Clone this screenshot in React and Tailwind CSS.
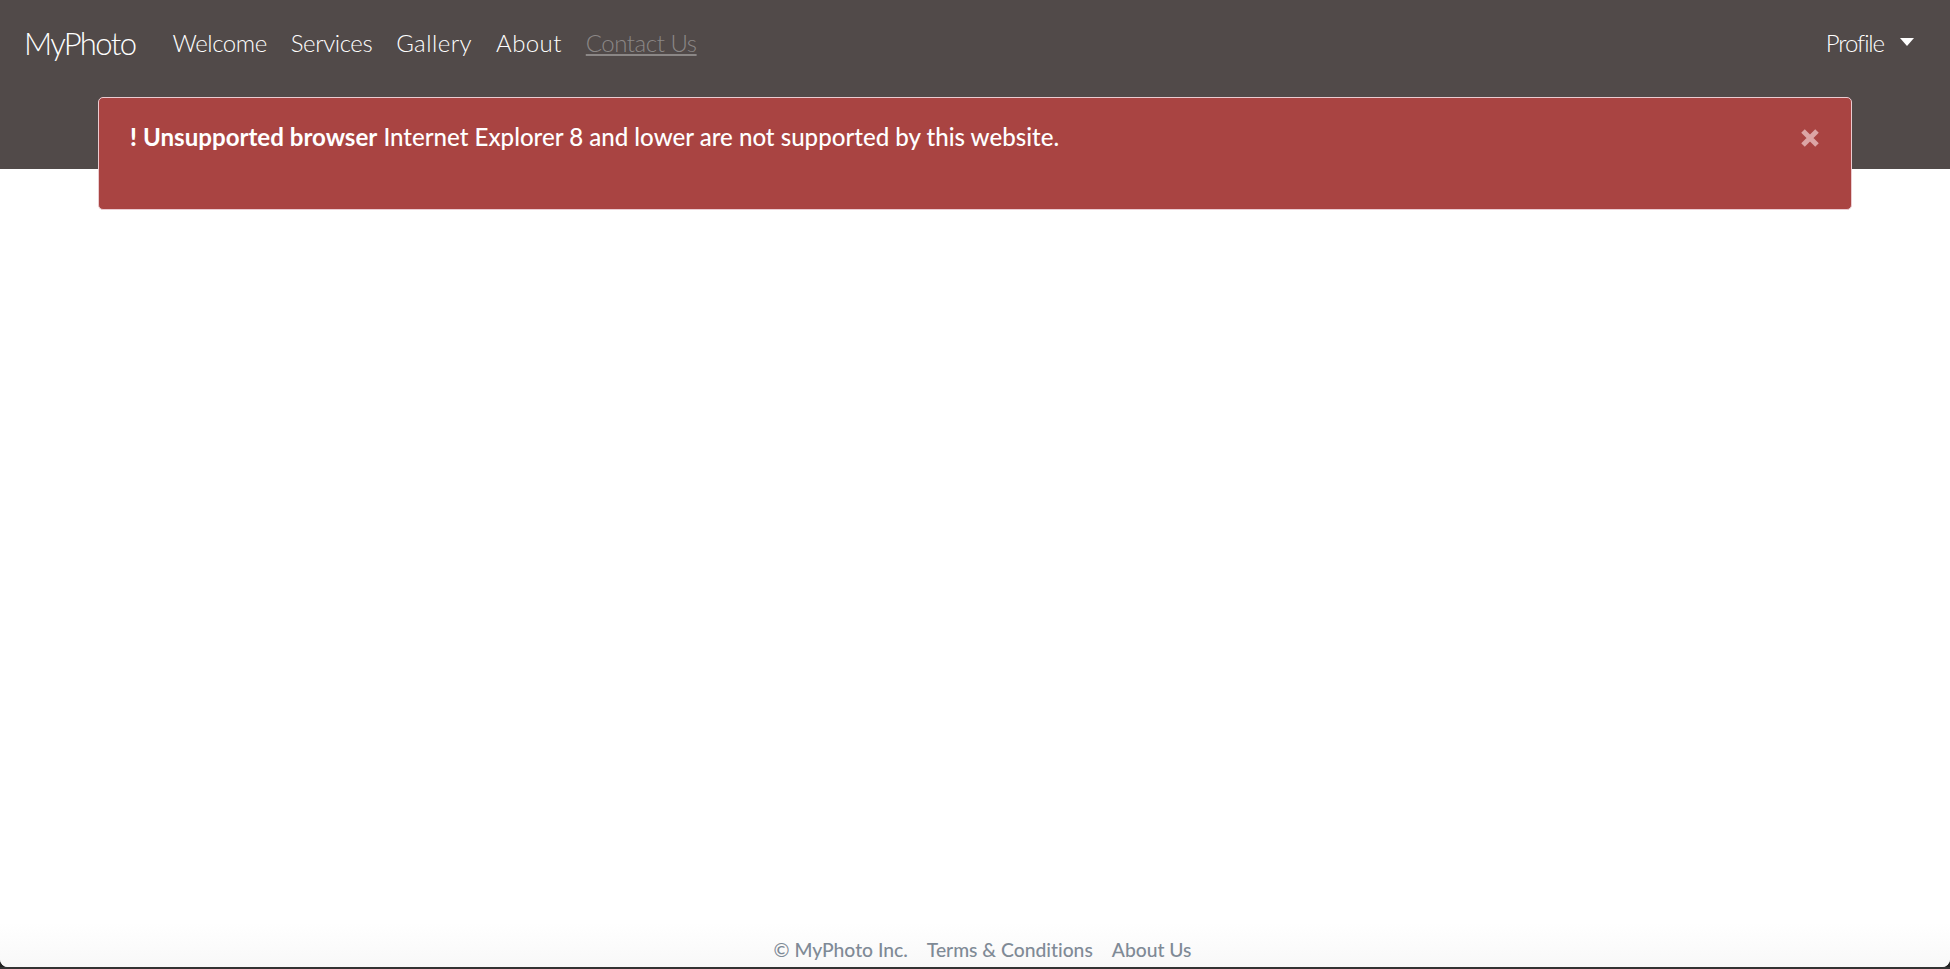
import React from "react";

const navFont = "font-['Lato','Noto_Sans',sans-serif] font-light";

const NavLink = ({ children, className = "" }) => (
  <a href="#" className={`${navFont} text-[24px] leading-[30px] text-white ${className}`}>
    {children}
  </a>
);

export default function App() {
  return (
    <div className="h-screen flex flex-col bg-[#222] overflow-hidden font-['Lato',sans-serif]">
      {/* Navbar */}
      <header className="h-[169px] shrink-0 bg-[#514a49]">
        <nav className="flex items-center h-[86px] pl-[24px] pr-[36px]">
          <a href="#" className={`${navFont} text-[31px] leading-[36px] tracking-[-1.6px] text-white mr-[37px]`}>MyPhoto</a>
          <div className="flex items-center gap-[24px]">
            <NavLink className="tracking-[-0.42px]">Welcome</NavLink>
            <NavLink className="tracking-[-0.45px]">Services</NavLink>
            <NavLink className="tracking-[0.45px]">Gallery</NavLink>
            <NavLink className="tracking-[0.4px]">About</NavLink>
            <NavLink className="tracking-[-0.45px] !text-[#8b8786] underline underline-offset-2">Contact Us</NavLink>
          </div>
          <div className="ml-auto flex items-center gap-[16px]">
            <NavLink className="tracking-[-1.1px]">Profile</NavLink>
            <span className="w-0 h-0 border-x-[7.5px] border-x-transparent border-t-[8px] border-t-white mb-[3px]" />
          </div>
        </nav>
      </header>

      {/* Alert and page body */}
      <div className="flex-1 flex flex-col rounded-b-[8px] bg-white">
        <div className="relative z-10 -mt-[72px] mx-[98px] h-[113px] shrink-0 flex items-start justify-between rounded-[5px] border border-[#ebccd1] bg-[#a94442] pl-[31px] pr-[30px] pt-[24px]">
          <p className="text-[24.1px] leading-[30px] text-white font-medium">
            <strong className="font-black">!</strong> <strong className="font-bold">Unsupported browser</strong> Internet Explorer 8 and lower are not supported by this website.
          </p>
          <svg width="20" height="20" viewBox="0 0 20 20" className="mt-[6px] mr-[1px] text-[#dca5a5]">
            <path d="M3 3 L17 17 M17 3 L3 17" stroke="currentColor" strokeWidth="5" />
          </svg>
        </div>

        <main className="flex-1" />

        {/* Footer */}
        <footer className="h-[44px] shrink-0 flex items-center justify-center gap-[19px] pl-[15px] pt-[11px] rounded-b-[8px] bg-gradient-to-b from-white to-[#f8f8f8] text-[19.3px] font-medium text-[#7f8a96] [font-variant-ligatures:none]">
          <span>© MyPhoto Inc.</span>
          <a href="#">Terms &amp; Conditions</a>
          <a href="#">About Us</a>
        </footer>
      </div>
      <div className="h-[2px] shrink-0 bg-[#333]" />
    </div>
  );
}
